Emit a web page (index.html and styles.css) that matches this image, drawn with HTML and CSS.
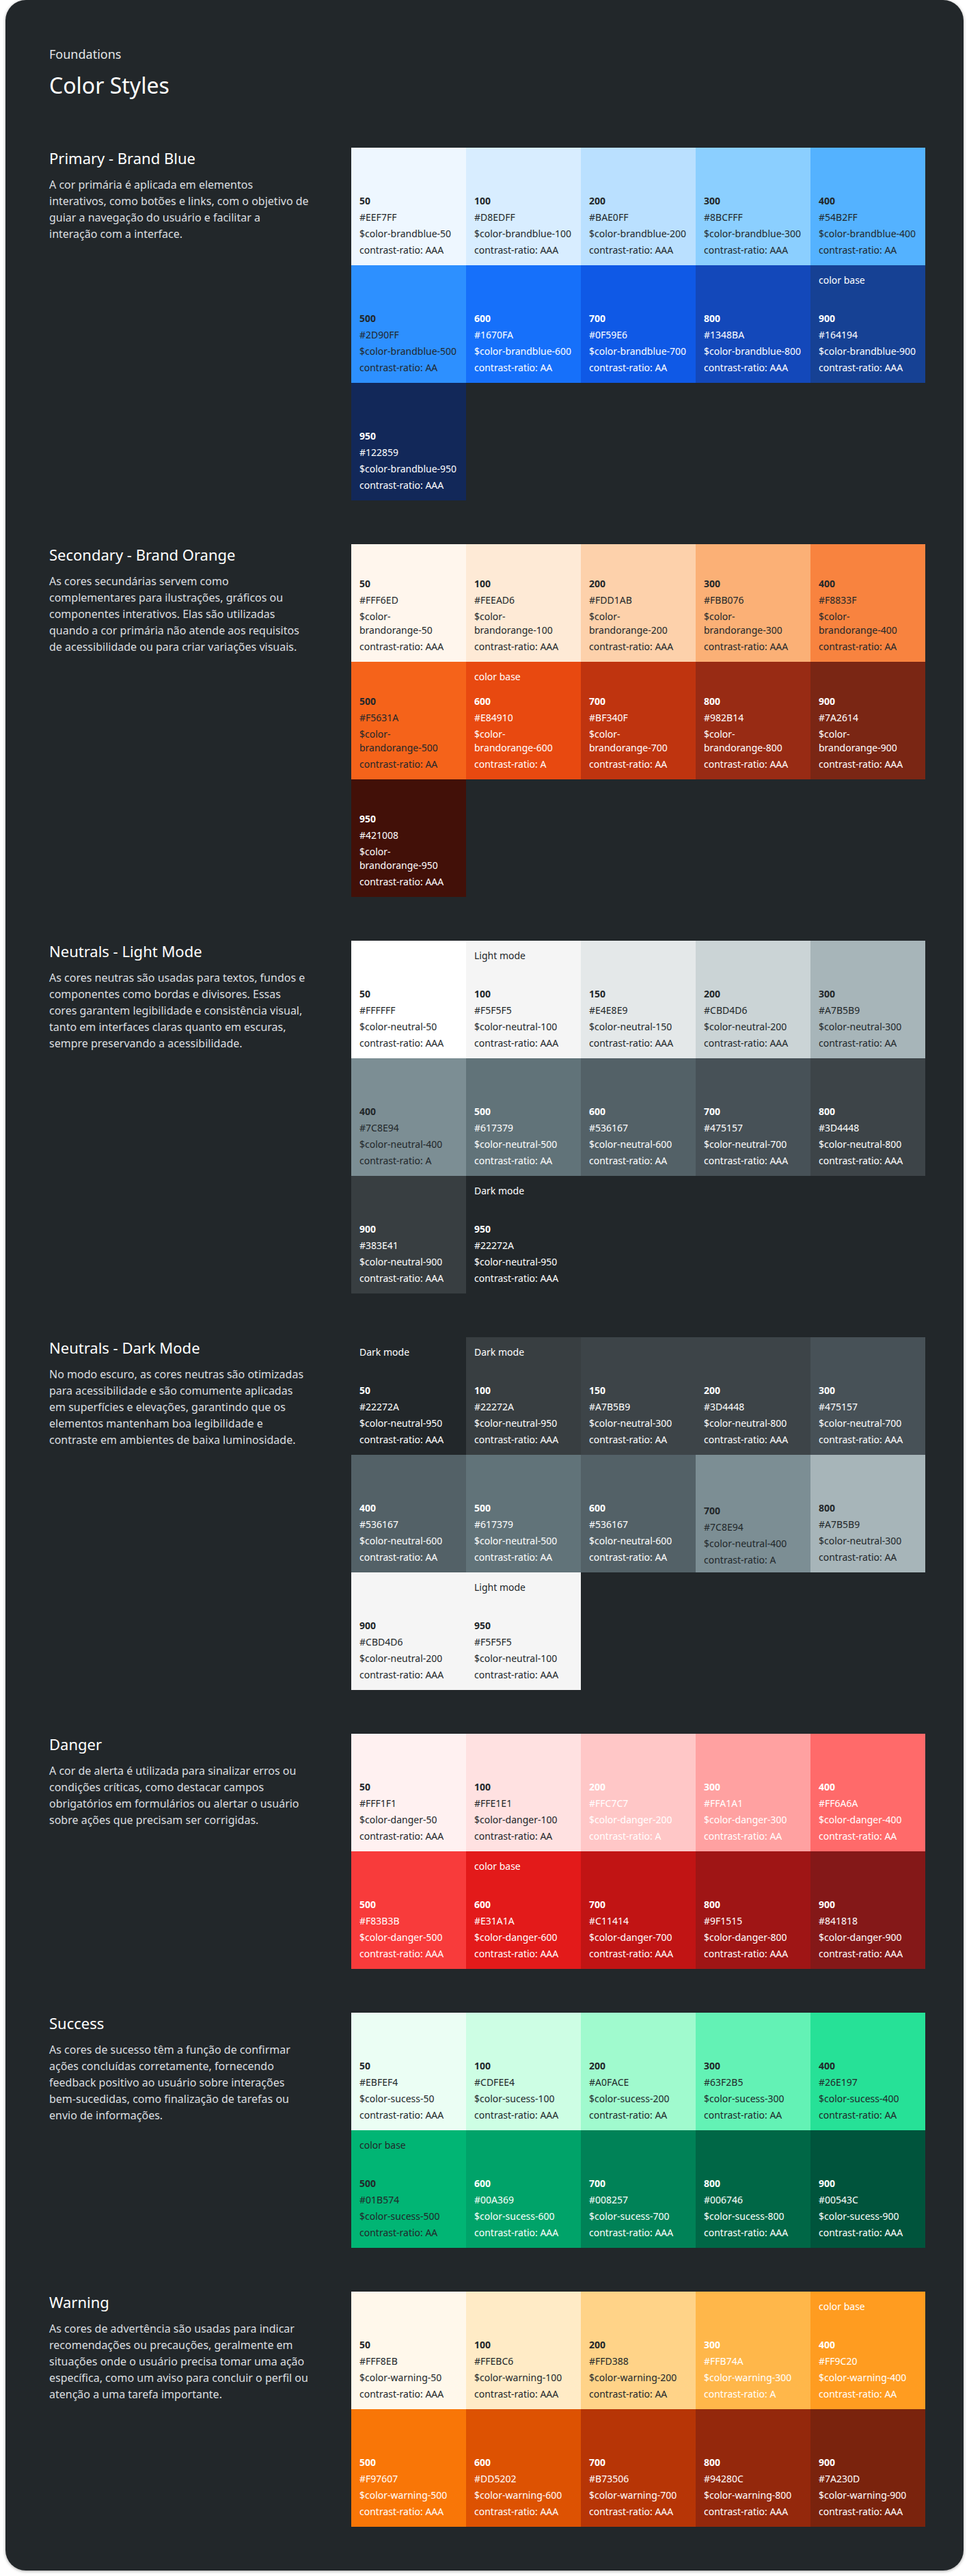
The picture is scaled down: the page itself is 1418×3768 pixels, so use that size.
FILE: index.html
```html
<!DOCTYPE html>
<html lang="pt-BR">
<head>
<meta charset="utf-8">
<title>Foundations – Color Styles</title>
<link rel="stylesheet" href="styles.css">
</head>
<body>
<main class="card">
  <header class="page-head">
    <p class="eyebrow">Foundations</p>
    <h1 class="title">Color Styles</h1>
  </header>

  <section class="group">
    <div class="intro">
      <h2>Primary - Brand Blue</h2>
      <p>A cor primária é aplicada em elementos interativos, como botões e links, com o objetivo de guiar a navegação do usuário e facilitar a interação com a interface.</p>
    </div>
    <div class="grid">
      <div class="sw dk bb50"><div class="info"><b>50</b><span>#EEF7FF</span><span>$color-brandblue-50</span><span>contrast-ratio: AAA</span></div></div>
      <div class="sw dk bb100"><div class="info"><b>100</b><span>#D8EDFF</span><span>$color-brandblue-100</span><span>contrast-ratio: AAA</span></div></div>
      <div class="sw dk bb200"><div class="info"><b>200</b><span>#BAE0FF</span><span>$color-brandblue-200</span><span>contrast-ratio: AAA</span></div></div>
      <div class="sw dk bb300"><div class="info"><b>300</b><span>#8BCFFF</span><span>$color-brandblue-300</span><span>contrast-ratio: AAA</span></div></div>
      <div class="sw dk bb400"><div class="info"><b>400</b><span>#54B2FF</span><span>$color-brandblue-400</span><span>contrast-ratio: AA</span></div></div>
      <div class="sw dk bb500"><div class="info"><b>500</b><span>#2D90FF</span><span>$color-brandblue-500</span><span>contrast-ratio: AA</span></div></div>
      <div class="sw bb600"><div class="info"><b>600</b><span>#1670FA</span><span>$color-brandblue-600</span><span>contrast-ratio: AA</span></div></div>
      <div class="sw bb700"><div class="info"><b>700</b><span>#0F59E6</span><span>$color-brandblue-700</span><span>contrast-ratio: AA</span></div></div>
      <div class="sw bb800"><div class="info"><b>800</b><span>#1348BA</span><span>$color-brandblue-800</span><span>contrast-ratio: AAA</span></div></div>
      <div class="sw bb900"><span class="tag">color base</span><div class="info"><b>900</b><span>#164194</span><span>$color-brandblue-900</span><span>contrast-ratio: AAA</span></div></div>
      <div class="sw bb950"><div class="info"><b>950</b><span>#122859</span><span>$color-brandblue-950</span><span>contrast-ratio: AAA</span></div></div>
    </div>
  </section>

  <section class="group">
    <div class="intro">
      <h2>Secondary - Brand Orange</h2>
      <p>As cores secundárias servem como complementares para ilustrações, gráficos ou componentes interativos. Elas são utilizadas quando a cor primária não atende aos requisitos de acessibilidade ou para criar variações visuais.</p>
    </div>
    <div class="grid">
      <div class="sw dk bo50"><div class="info"><b>50</b><span>#FFF6ED</span><span>$color-<span class="nw">brandorange-50</span></span><span>contrast-ratio: AAA</span></div></div>
      <div class="sw dk bo100"><div class="info"><b>100</b><span>#FEEAD6</span><span>$color-<span class="nw">brandorange-100</span></span><span>contrast-ratio: AAA</span></div></div>
      <div class="sw dk bo200"><div class="info"><b>200</b><span>#FDD1AB</span><span>$color-<span class="nw">brandorange-200</span></span><span>contrast-ratio: AAA</span></div></div>
      <div class="sw dk bo300"><div class="info"><b>300</b><span>#FBB076</span><span>$color-<span class="nw">brandorange-300</span></span><span>contrast-ratio: AAA</span></div></div>
      <div class="sw dk bo400"><div class="info"><b>400</b><span>#F8833F</span><span>$color-<span class="nw">brandorange-400</span></span><span>contrast-ratio: AA</span></div></div>
      <div class="sw dk bo500"><div class="info"><b>500</b><span>#F5631A</span><span>$color-<span class="nw">brandorange-500</span></span><span>contrast-ratio: AA</span></div></div>
      <div class="sw bo600"><span class="tag">color base</span><div class="info"><b>600</b><span>#E84910</span><span>$color-<span class="nw">brandorange-600</span></span><span>contrast-ratio: A</span></div></div>
      <div class="sw bo700"><div class="info"><b>700</b><span>#BF340F</span><span>$color-<span class="nw">brandorange-700</span></span><span>contrast-ratio: AA</span></div></div>
      <div class="sw bo800"><div class="info"><b>800</b><span>#982B14</span><span>$color-<span class="nw">brandorange-800</span></span><span>contrast-ratio: AAA</span></div></div>
      <div class="sw bo900"><div class="info"><b>900</b><span>#7A2614</span><span>$color-<span class="nw">brandorange-900</span></span><span>contrast-ratio: AAA</span></div></div>
      <div class="sw bo950"><div class="info"><b>950</b><span>#421008</span><span>$color-<span class="nw">brandorange-950</span></span><span>contrast-ratio: AAA</span></div></div>
    </div>
  </section>

  <section class="group">
    <div class="intro">
      <h2>Neutrals - Light Mode</h2>
      <p>As cores neutras são usadas para textos, fundos e componentes como bordas e divisores. Essas cores garantem legibilidade e consistência visual, tanto em interfaces claras quanto em escuras, sempre preservando a acessibilidade.</p>
    </div>
    <div class="grid">
      <div class="sw dk n50"><div class="info"><b>50</b><span>#FFFFFF</span><span>$color-neutral-50</span><span>contrast-ratio: AAA</span></div></div>
      <div class="sw dk n100"><span class="tag">Light mode</span><div class="info"><b>100</b><span>#F5F5F5</span><span>$color-neutral-100</span><span>contrast-ratio: AAA</span></div></div>
      <div class="sw dk n150"><div class="info"><b>150</b><span>#E4E8E9</span><span>$color-neutral-150</span><span>contrast-ratio: AAA</span></div></div>
      <div class="sw dk n200"><div class="info"><b>200</b><span>#CBD4D6</span><span>$color-neutral-200</span><span>contrast-ratio: AAA</span></div></div>
      <div class="sw dk n300"><div class="info"><b>300</b><span>#A7B5B9</span><span>$color-neutral-300</span><span>contrast-ratio: AA</span></div></div>
      <div class="sw dk n400"><div class="info"><b>400</b><span>#7C8E94</span><span>$color-neutral-400</span><span>contrast-ratio: A</span></div></div>
      <div class="sw n500"><div class="info"><b>500</b><span>#617379</span><span>$color-neutral-500</span><span>contrast-ratio: AA</span></div></div>
      <div class="sw n600"><div class="info"><b>600</b><span>#536167</span><span>$color-neutral-600</span><span>contrast-ratio: AA</span></div></div>
      <div class="sw n700"><div class="info"><b>700</b><span>#475157</span><span>$color-neutral-700</span><span>contrast-ratio: AAA</span></div></div>
      <div class="sw n800"><div class="info"><b>800</b><span>#3D4448</span><span>$color-neutral-800</span><span>contrast-ratio: AAA</span></div></div>
      <div class="sw n900"><div class="info"><b>900</b><span>#383E41</span><span>$color-neutral-900</span><span>contrast-ratio: AAA</span></div></div>
      <div class="sw n950"><span class="tag">Dark mode</span><div class="info"><b>950</b><span>#22272A</span><span>$color-neutral-950</span><span>contrast-ratio: AAA</span></div></div>
    </div>
  </section>

  <section class="group">
    <div class="intro">
      <h2>Neutrals - Dark Mode</h2>
      <p>No modo escuro, as cores neutras são otimizadas para acessibilidade e são comumente aplicadas em superfícies e elevações, garantindo que os elementos mantenham boa legibilidade e contraste em ambientes de baixa luminosidade.</p>
    </div>
    <div class="grid">
      <div class="sw n950"><span class="tag">Dark mode</span><div class="info"><b>50</b><span>#22272A</span><span>$color-neutral-950</span><span>contrast-ratio: AAA</span></div></div>
      <div class="sw n900"><span class="tag">Dark mode</span><div class="info"><b>100</b><span>#22272A</span><span>$color-neutral-950</span><span>contrast-ratio: AAA</span></div></div>
      <div class="sw n800"><div class="info"><b>150</b><span>#A7B5B9</span><span>$color-neutral-300</span><span>contrast-ratio: AA</span></div></div>
      <div class="sw n800"><div class="info"><b>200</b><span>#3D4448</span><span>$color-neutral-800</span><span>contrast-ratio: AAA</span></div></div>
      <div class="sw n700"><div class="info"><b>300</b><span>#475157</span><span>$color-neutral-700</span><span>contrast-ratio: AAA</span></div></div>
      <div class="sw n600"><div class="info"><b>400</b><span>#536167</span><span>$color-neutral-600</span><span>contrast-ratio: AA</span></div></div>
      <div class="sw n500"><div class="info"><b>500</b><span>#617379</span><span>$color-neutral-500</span><span>contrast-ratio: AA</span></div></div>
      <div class="sw n600"><div class="info"><b>600</b><span>#536167</span><span>$color-neutral-600</span><span>contrast-ratio: AA</span></div></div>
      <div class="sw dk n400"><div class="info shifted"><b>700</b><span>#7C8E94</span><span>$color-neutral-400</span><span>contrast-ratio: A</span></div></div>
      <div class="sw dk n300"><div class="info"><b>800</b><span>#A7B5B9</span><span>$color-neutral-300</span><span>contrast-ratio: AA</span></div></div>
      <div class="sw dk n100"><div class="info"><b>900</b><span>#CBD4D6</span><span>$color-neutral-200</span><span>contrast-ratio: AAA</span></div></div>
      <div class="sw dk n100"><span class="tag">Light mode</span><div class="info"><b>950</b><span>#F5F5F5</span><span>$color-neutral-100</span><span>contrast-ratio: AAA</span></div></div>
    </div>
  </section>

  <section class="group">
    <div class="intro">
      <h2>Danger</h2>
      <p>A cor de alerta é utilizada para sinalizar erros ou condições críticas, como destacar campos obrigatórios em formulários ou alertar o usuário sobre ações que precisam ser corrigidas.</p>
    </div>
    <div class="grid">
      <div class="sw dk dg50"><div class="info"><b>50</b><span>#FFF1F1</span><span>$color-danger-50</span><span>contrast-ratio: AAA</span></div></div>
      <div class="sw dk dg100"><div class="info"><b>100</b><span>#FFE1E1</span><span>$color-danger-100</span><span>contrast-ratio: AA</span></div></div>
      <div class="sw dg200"><div class="info"><b>200</b><span>#FFC7C7</span><span>$color-danger-200</span><span>contrast-ratio: A</span></div></div>
      <div class="sw dg300"><div class="info"><b>300</b><span>#FFA1A1</span><span>$color-danger-300</span><span>contrast-ratio: AA</span></div></div>
      <div class="sw dg400"><div class="info"><b>400</b><span>#FF6A6A</span><span>$color-danger-400</span><span>contrast-ratio: AA</span></div></div>
      <div class="sw dg500"><div class="info"><b>500</b><span>#F83B3B</span><span>$color-danger-500</span><span>contrast-ratio: AAA</span></div></div>
      <div class="sw dg600"><span class="tag">color base</span><div class="info"><b>600</b><span>#E31A1A</span><span>$color-danger-600</span><span>contrast-ratio: AAA</span></div></div>
      <div class="sw dg700"><div class="info"><b>700</b><span>#C11414</span><span>$color-danger-700</span><span>contrast-ratio: AAA</span></div></div>
      <div class="sw dg800"><div class="info"><b>800</b><span>#9F1515</span><span>$color-danger-800</span><span>contrast-ratio: AAA</span></div></div>
      <div class="sw dg900"><div class="info"><b>900</b><span>#841818</span><span>$color-danger-900</span><span>contrast-ratio: AAA</span></div></div>
    </div>
  </section>

  <section class="group">
    <div class="intro">
      <h2>Success</h2>
      <p>As cores de sucesso têm a função de confirmar ações concluídas corretamente, fornecendo feedback positivo ao usuário sobre interações bem-sucedidas, como finalização de tarefas ou envio de informações.</p>
    </div>
    <div class="grid">
      <div class="sw dk sc50"><div class="info"><b>50</b><span>#EBFEF4</span><span>$color-sucess-50</span><span>contrast-ratio: AAA</span></div></div>
      <div class="sw dk sc100"><div class="info"><b>100</b><span>#CDFEE4</span><span>$color-sucess-100</span><span>contrast-ratio: AAA</span></div></div>
      <div class="sw dk sc200"><div class="info"><b>200</b><span>#A0FACE</span><span>$color-sucess-200</span><span>contrast-ratio: AA</span></div></div>
      <div class="sw dk sc300"><div class="info"><b>300</b><span>#63F2B5</span><span>$color-sucess-300</span><span>contrast-ratio: AA</span></div></div>
      <div class="sw dk sc400"><div class="info"><b>400</b><span>#26E197</span><span>$color-sucess-400</span><span>contrast-ratio: AA</span></div></div>
      <div class="sw dk sc500"><span class="tag">color base</span><div class="info"><b>500</b><span>#01B574</span><span>$color-sucess-500</span><span>contrast-ratio: AA</span></div></div>
      <div class="sw sc600"><div class="info"><b>600</b><span>#00A369</span><span>$color-sucess-600</span><span>contrast-ratio: AAA</span></div></div>
      <div class="sw sc700"><div class="info"><b>700</b><span>#008257</span><span>$color-sucess-700</span><span>contrast-ratio: AAA</span></div></div>
      <div class="sw sc800"><div class="info"><b>800</b><span>#006746</span><span>$color-sucess-800</span><span>contrast-ratio: AAA</span></div></div>
      <div class="sw sc900"><div class="info"><b>900</b><span>#00543C</span><span>$color-sucess-900</span><span>contrast-ratio: AAA</span></div></div>
    </div>
  </section>

  <section class="group">
    <div class="intro">
      <h2>Warning</h2>
      <p>As cores de advertência são usadas para indicar recomendações ou precauções, geralmente em situações onde o usuário precisa tomar uma ação específica, como um aviso para concluir o perfil ou atenção a uma tarefa importante.</p>
    </div>
    <div class="grid">
      <div class="sw dk wn50"><div class="info"><b>50</b><span>#FFF8EB</span><span>$color-warning-50</span><span>contrast-ratio: AAA</span></div></div>
      <div class="sw dk wn100"><div class="info"><b>100</b><span>#FFEBC6</span><span>$color-warning-100</span><span>contrast-ratio: AAA</span></div></div>
      <div class="sw dk wn200"><div class="info"><b>200</b><span>#FFD388</span><span>$color-warning-200</span><span>contrast-ratio: AA</span></div></div>
      <div class="sw wn300"><div class="info"><b>300</b><span>#FFB74A</span><span>$color-warning-300</span><span>contrast-ratio: A</span></div></div>
      <div class="sw wn400"><span class="tag">color base</span><div class="info"><b>400</b><span>#FF9C20</span><span>$color-warning-400</span><span>contrast-ratio: AA</span></div></div>
      <div class="sw wn500"><div class="info"><b>500</b><span>#F97607</span><span>$color-warning-500</span><span>contrast-ratio: AAA</span></div></div>
      <div class="sw wn600"><div class="info"><b>600</b><span>#DD5202</span><span>$color-warning-600</span><span>contrast-ratio: AAA</span></div></div>
      <div class="sw wn700"><div class="info"><b>700</b><span>#B73506</span><span>$color-warning-700</span><span>contrast-ratio: AAA</span></div></div>
      <div class="sw wn800"><div class="info"><b>800</b><span>#94280C</span><span>$color-warning-800</span><span>contrast-ratio: AAA</span></div></div>
      <div class="sw wn900"><div class="info"><b>900</b><span>#7A230D</span><span>$color-warning-900</span><span>contrast-ratio: AAA</span></div></div>
    </div>
  </section>
</main>
</body>
</html>
```

FILE: styles.css
```css
* { box-sizing: border-box; }

body {
  margin: 0;
  padding: 0 8px 8px;
  background: #ffffff;
  font-family: "Noto Sans", "Open Sans", sans-serif;
}

.card {
  background: #22272a;
  border-radius: 30px;
  box-shadow: 0 1px 4px rgba(0, 0, 0, 0.35);
  padding: 67px 56px 64px 64px;
}

.page-head { margin-bottom: 71px; }

.eyebrow {
  margin: 0;
  font-size: 18px;
  line-height: 24px;
  color: #e4e6e7;
}

.title {
  margin: 14px 0 0;
  font-size: 32px;
  line-height: 40px;
  font-weight: 400;
  color: #ffffff;
}

.group {
  display: grid;
  grid-template-columns: 442px 840px;
  align-items: start;
}

.group + .group { margin-top: 64px; }

.intro h2 {
  margin: 0;
  font-size: 22px;
  line-height: 30px;
  font-weight: 400;
  color: #ffffff;
}

.intro p {
  margin: 12px 0 0;
  max-width: 380px;
  font-size: 16px;
  line-height: 24px;
  color: #dcdfe0;
}

.grid {
  display: grid;
  grid-template-columns: repeat(5, 168px);
  grid-auto-rows: 172px;
}

.sw {
  display: flex;
  flex-direction: column;
  padding: 12px 8px 12px 12px;
  font-size: 14px;
  line-height: 20px;
  color: #ffffff;
}

.sw.dk { color: #22272a; }

.tag { display: block; }

.info {
  margin-top: auto;
  display: flex;
  flex-direction: column;
  gap: 4px;
}

.info b { font-weight: 700; }

.nw { white-space: nowrap; }

.info.shifted { transform: translateY(4px); }

/* Brand blue */
.bb50 { background: #eef7ff; }
.bb100 { background: #d8edff; }
.bb200 { background: #bae0ff; }
.bb300 { background: #8bcfff; }
.bb400 { background: #54b2ff; }
.bb500 { background: #2d90ff; }
.bb600 { background: #1670fa; }
.bb700 { background: #0f59e6; }
.bb800 { background: #1348ba; }
.bb900 { background: #164194; }
.bb950 { background: #122859; }

/* Brand orange */
.bo50 { background: #fff6ed; }
.bo100 { background: #feead6; }
.bo200 { background: #fdd1ab; }
.bo300 { background: #fbb076; }
.bo400 { background: #f8833f; }
.bo500 { background: #f5631a; }
.bo600 { background: #e84910; }
.bo700 { background: #bf340f; }
.bo800 { background: #982b14; }
.bo900 { background: #7a2614; }
.bo950 { background: #421008; }

/* Neutrals */
.n50 { background: #ffffff; }
.n100 { background: #f5f5f5; }
.n150 { background: #e4e8e9; }
.n200 { background: #cbd4d6; }
.n300 { background: #a7b5b9; }
.n400 { background: #7c8e94; }
.n500 { background: #617379; }
.n600 { background: #536167; }
.n700 { background: #475157; }
.n800 { background: #3d4448; }
.n900 { background: #383e41; }
.n950 { background: #22272a; }

/* Danger */
.dg50 { background: #fff1f1; }
.dg100 { background: #ffe1e1; }
.dg200 { background: #ffc7c7; }
.dg300 { background: #ffa1a1; }
.dg400 { background: #ff6a6a; }
.dg500 { background: #f83b3b; }
.dg600 { background: #e31a1a; }
.dg700 { background: #c11414; }
.dg800 { background: #9f1515; }
.dg900 { background: #841818; }

/* Success */
.sc50 { background: #ebfef4; }
.sc100 { background: #cdfee4; }
.sc200 { background: #a0face; }
.sc300 { background: #63f2b5; }
.sc400 { background: #26e197; }
.sc500 { background: #01b574; }
.sc600 { background: #00a369; }
.sc700 { background: #008257; }
.sc800 { background: #006746; }
.sc900 { background: #00543c; }

/* Warning */
.wn50 { background: #fff8eb; }
.wn100 { background: #ffebc6; }
.wn200 { background: #ffd388; }
.wn300 { background: #ffb74a; }
.wn400 { background: #ff9c20; }
.wn500 { background: #f97607; }
.wn600 { background: #dd5202; }
.wn700 { background: #b73506; }
.wn800 { background: #94280c; }
.wn900 { background: #7a230d; }
```
